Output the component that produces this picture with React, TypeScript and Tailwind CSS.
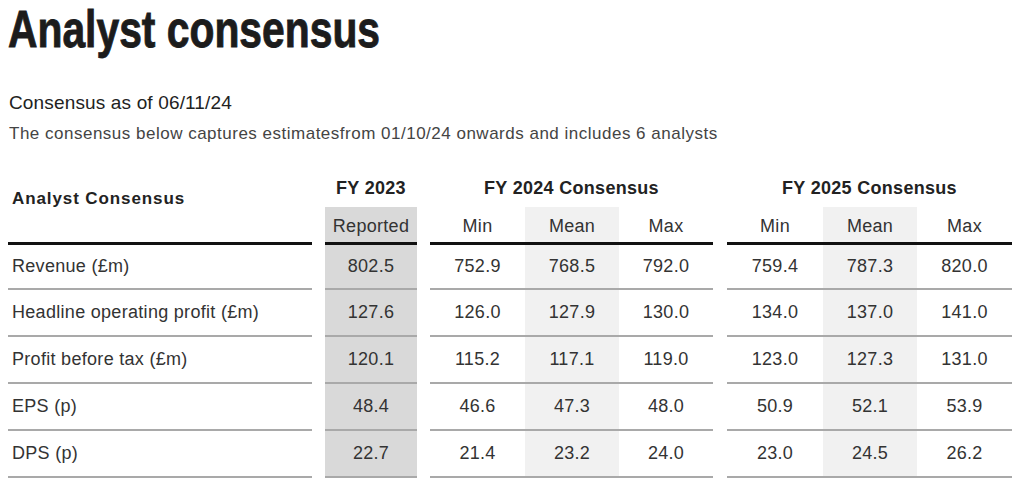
import React from "react";

const rows: { label: string; v: string[] }[] = [
  { label: "Revenue (£m)", v: ["802.5", "752.9", "768.5", "792.0", "759.4", "787.3", "820.0"] },
  { label: "Headline operating profit (£m)", v: ["127.6", "126.0", "127.9", "130.0", "134.0", "137.0", "141.0"] },
  { label: "Profit before tax (£m)", v: ["120.1", "115.2", "117.1", "119.0", "123.0", "127.3", "131.0"] },
  { label: "EPS (p)", v: ["48.4", "46.6", "47.3", "48.0", "50.9", "52.1", "53.9"] },
  { label: "DPS (p)", v: ["22.7", "21.4", "23.2", "24.0", "23.0", "24.5", "26.2"] },
];

const font = { fontFamily: '"Liberation Sans", Arial, Helvetica, sans-serif' };

export default function App() {
  const line = "border-b-2 border-[#a9a9a9]";
  const thick = "border-b-[3px] border-[#111111]";
  return (
    <div className="w-[1022px] h-[484px] bg-white overflow-hidden font-['Liberation_Sans',Arial,sans-serif]" style={font}>
      <div className="pl-[8px] pt-[3px]">
        <h1 className="text-[52px] leading-[52px] font-bold text-[#1c1c1c] origin-left scale-x-[0.785] whitespace-nowrap [-webkit-text-stroke:0.9px_#1c1c1c]">
          Analyst consensus
        </h1>
        <div className="mt-[36px] text-[19px] leading-[24px] text-[#222] pl-[1px] tracking-[0.15px]">Consensus as of 06/11/24</div>
        <div className="mt-[7px] text-[17px] leading-[24px] text-[#444] pl-[1px] tracking-[0.5px]">
          The consensus below captures estimatesfrom 01/10/24 onwards and includes 6 analysts
        </div>
      </div>

      <div className="mt-[24px] ml-[8px] grid grid-cols-[304px_13px_92px_13px_95px_94px_94px_14px_96px_94px_95px] grid-rows-[37px_38px_45px_47px_47px_47px_47px] text-[18px] tracking-[0.3px] text-[#333]">
        <div className={`row-span-2 col-start-1 ${thick} pl-[4px] pt-[19px] text-[17px] leading-[20px] font-bold text-[#222] tracking-[0.9px]`}>
          Analyst Consensus
        </div>
        <div className="col-start-3 row-start-1 flex items-center justify-center font-bold text-[#222]">FY 2023</div>
        <div className="col-start-5 col-span-3 row-start-1 flex items-center justify-center font-bold text-[#222]">
          FY 2024 Consensus
        </div>
        <div className="col-start-9 col-span-3 row-start-1 flex items-center justify-center font-bold text-[#222]">
          FY 2025 Consensus
        </div>

        <div className={`col-start-3 row-start-2 bg-[#d9d9d9] ${thick} flex items-center justify-center pt-[4px]`}>Reported</div>
        <div className={`col-start-5 row-start-2 ${thick} flex items-center justify-center pt-[4px]`}>Min</div>
        <div className={`col-start-6 row-start-2 bg-[#f1f1f1] ${thick} flex items-center justify-center pt-[4px]`}>Mean</div>
        <div className={`col-start-7 row-start-2 ${thick} flex items-center justify-center pt-[4px]`}>Max</div>
        <div className={`col-start-9 row-start-2 ${thick} flex items-center justify-center pt-[4px]`}>Min</div>
        <div className={`col-start-10 row-start-2 bg-[#f1f1f1] ${thick} flex items-center justify-center pt-[4px]`}>Mean</div>
        <div className={`col-start-11 row-start-2 ${thick} flex items-center justify-center pt-[4px]`}>Max</div>

        {rows.map((r) => (
          <React.Fragment key={r.label}>
            <div className={`col-start-1 ${line} flex items-center pl-[4px]`}>{r.label}</div>
            <div className={`col-start-3 bg-[#d9d9d9] ${line} flex items-center justify-center`}>{r.v[0]}</div>
            <div className={`col-start-5 ${line} flex items-center justify-center`}>{r.v[1]}</div>
            <div className={`col-start-6 bg-[#f1f1f1] ${line} flex items-center justify-center`}>{r.v[2]}</div>
            <div className={`col-start-7 ${line} flex items-center justify-center`}>{r.v[3]}</div>
            <div className={`col-start-9 ${line} flex items-center justify-center`}>{r.v[4]}</div>
            <div className={`col-start-10 bg-[#f1f1f1] ${line} flex items-center justify-center`}>{r.v[5]}</div>
            <div className={`col-start-11 ${line} flex items-center justify-center`}>{r.v[6]}</div>
          </React.Fragment>
        ))}
      </div>
    </div>
  );
}
